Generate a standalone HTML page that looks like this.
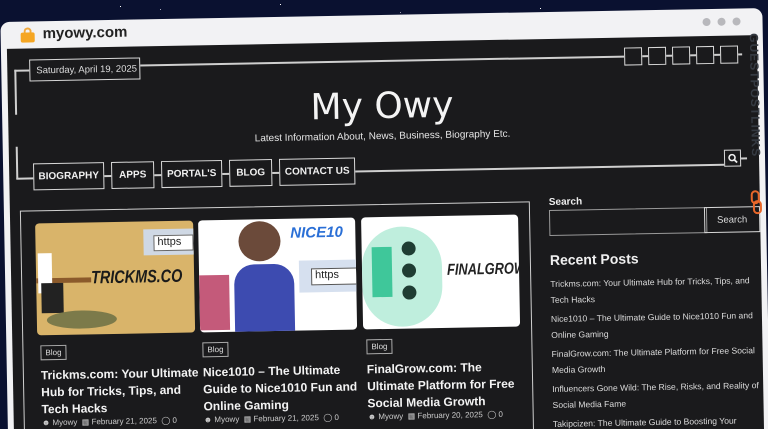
<!DOCTYPE html>
<html><head><meta charset="utf-8"><style>
*{margin:0;padding:0;box-sizing:border-box}
html,body{width:768px;height:429px;overflow:hidden;background:#0a1130;font-family:"Liberation Sans",sans-serif}
#clip{position:fixed;left:0;top:0;width:768px;height:429px;overflow:hidden;background:#0a1130}
#stage{position:absolute;left:0;top:0;width:768px;height:429px;transform:rotate(-1.05deg);transform-origin:384px 214px}
.win{position:absolute;left:4px;top:15px;width:762px;height:460px;background:#f2f2f4;border-radius:9px}
.bar{position:absolute;left:0;top:0;width:100%;height:27px}
.content{position:absolute;left:6px;top:27px;width:750px;height:440px;background:#1a1a1c}
.a{position:absolute}
.box{position:absolute;border:1.5px solid #d8d8d8;color:#eee}
.ln{position:absolute;background:#cfcfcf}
.nav{position:absolute;top:157px;height:27px;border:1.5px solid #d8d8d8;color:#f0f0f0;font-size:10px;font-weight:bold;display:flex;align-items:center;justify-content:center;white-space:nowrap}
.img{position:absolute;top:217px;height:112px;border-radius:4px;overflow:hidden}
.tag{position:absolute;top:339px;font-size:8px;color:#ddd;border:1px solid #aaa;padding:2px 4px}
.ct{position:absolute;top:361px;width:162px;font-weight:bold;font-size:12px;line-height:17px;color:#f3f3f3}
.meta{position:absolute;top:412px;font-size:8px;color:#ccc;white-space:nowrap}
.rp{position:absolute;left:549px;width:215px;font-size:8.6px;line-height:16px;color:#ddd}
</style></head><body>
<div id="clip">
<div style="position:absolute;left:120px;top:6px;width:1px;height:1px;background:#fff;box-shadow:40px 3px #aab,160px -2px #fff,280px 6px #99a,420px 2px #fff,520px 8px #ccd,-80px 30px #556,-100px 200px #445,660px -3px #bbc"></div>
<div id="stage">
<div class="win">
 <div class="bar">
  <div class="a" style="left:20px;top:6px;width:14px;height:13px">
   <div class="a" style="left:3px;top:0;width:8px;height:8px;border:2px solid #f2a93b;border-bottom:none;border-radius:4px 4px 0 0"></div>
   <div class="a" style="left:0;top:5px;width:14px;height:10px;background:#f5a623;border-radius:2px"></div>
  </div>
  <div class="a" style="left:42px;top:4px;font-size:15px;font-weight:bold;color:#222">myowy.com</div>
  <div class="a" style="left:702px;top:9px;width:8px;height:8px;border-radius:50%;background:#b8b8bc;box-shadow:15px 0 #b8b8bc,30px 0 #b8b8bc"></div>
 </div>
 <div class="content"></div>
</div>
<div class="ln" style="left:143px;top:60px;width:484px;height:1.5px"></div>
<div class="box" style="left:32px;top:53px;width:111px;height:22px;font-size:9.5px;padding:5px 0 0 6px;color:#ddd;white-space:nowrap">Saturday, April 19, 2025</div>
<div class="ln" style="left:17px;top:63px;width:15px;height:1.5px"></div>
<div class="ln" style="left:17px;top:63px;width:1.5px;height:45px"></div>
<div class="ln" style="left:17px;top:140px;width:1.5px;height:32px"></div>
<div class="ln" style="left:17px;top:171px;width:17px;height:1.5px"></div>
<div class="ln" style="left:645px;top:60px;width:100px;height:1.5px"></div>
<div class="box" style="left:627px;top:52px;width:18px;height:18px;background:#1a1a1c"></div>
<div class="box" style="left:651px;top:52px;width:18px;height:18px;background:#1a1a1c"></div>
<div class="box" style="left:675px;top:52px;width:18px;height:18px;background:#1a1a1c"></div>
<div class="box" style="left:699px;top:52px;width:18px;height:18px;background:#1a1a1c"></div>
<div class="box" style="left:723px;top:52px;width:18px;height:18px;background:#1a1a1c"></div>
<div class="a" style="left:0;top:86px;width:768px;text-align:center;font-family:'DejaVu Sans',sans-serif;font-size:36px;color:#f4f4f4">My Owy</div>
<div class="a" style="left:0;top:131px;width:768px;text-align:center;font-size:10px;color:#e4e4e4">Latest Information About, News, Business, Biography Etc.</div>
<div class="nav" style="left:34px;width:71px">BIOGRAPHY</div>
<div class="nav" style="left:112px;width:43px">APPS</div>
<div class="nav" style="left:162px;width:61px">PORTAL'S</div>
<div class="nav" style="left:230px;width:43px">BLOG</div>
<div class="nav" style="left:280px;width:76px">CONTACT US</div>
<div class="ln" style="left:105px;top:170px;width:7px;height:1.5px"></div>
<div class="ln" style="left:155px;top:170px;width:7px;height:1.5px"></div>
<div class="ln" style="left:223px;top:170px;width:7px;height:1.5px"></div>
<div class="ln" style="left:273px;top:170px;width:7px;height:1.5px"></div>
<div class="ln" style="left:356px;top:170px;width:369px;height:1.5px"></div>
<div class="box" style="left:725px;top:156px;width:17px;height:17px"><svg width="14" height="14" viewBox="0 0 14 14" style="position:absolute;left:1px;top:1px"><circle cx="6" cy="6" r="3" stroke="#eee" stroke-width="1.6" fill="none"/><path d="M8 8l3 3" stroke="#eee" stroke-width="1.8"/></svg></div>
<div class="ln" style="left:742px;top:164px;width:6px;height:1.5px"></div>
<div class="a" style="left:20px;top:204px;width:510px;height:300px;border:1.5px solid #cfcfcf"></div>
<div class="img" style="left:35px;width:158px;background:#d9b46a">
 <div class="a" style="left:108px;top:8px;width:60px;height:26px;background:#cfd8e4"></div>
 <div class="a" style="left:118px;top:14px;width:40px;height:16px;background:#fff;border:1px solid #666;font-size:11px;color:#222;padding-left:3px">https</div>
 <div class="a" style="left:55px;top:45px;font-weight:bold;font-style:italic;font-size:18px;color:#1a1a1a;transform:scaleX(.8);transform-origin:left">TRICKMS.CO</div>
 <div class="a" style="left:0;top:55px;width:55px;height:5px;background:#8b5a2b"></div>
 <div class="a" style="left:2px;top:30px;width:14px;height:40px;background:#fff"></div>
 <div class="a" style="left:5px;top:60px;width:22px;height:30px;background:#222"></div>
 <div class="a" style="left:10px;top:88px;width:70px;height:18px;border-radius:50%;background:#7c7a4a"></div>
</div>
<div class="img" style="left:198px;width:157px;background:#fff">
 <div class="a" style="left:92px;top:6px;font-weight:bold;font-style:italic;font-size:15px;color:#2a6fd6">NICE10</div>
 <div class="a" style="left:100px;top:42px;width:60px;height:32px;background:#d6e0ef"></div>
 <div class="a" style="left:112px;top:50px;width:46px;height:17px;background:#fff;border:1px solid #555;font-size:11px;color:#222;padding-left:3px">https</div>
 <div class="a" style="left:40px;top:2px;width:42px;height:40px;border-radius:50%;background:#6b4a3a"></div>
 <div class="a" style="left:35px;top:45px;width:60px;height:70px;border-radius:20px 20px 0 0;background:#3d4bb0"></div>
 <div class="a" style="left:0;top:55px;width:30px;height:55px;background:#c45a7a"></div>
</div>
<div class="img" style="left:361px;width:157px;background:#fff">
 <div class="a" style="left:0;top:10px;width:80px;height:100px;border-radius:40px;background:#bfeedd"></div>
 <div class="a" style="left:10px;top:30px;width:20px;height:50px;background:#3fc79a"></div>
 <div class="a" style="left:40px;top:25px;width:14px;height:14px;border-radius:50%;background:#1f3d33;box-shadow:0 22px #1f3d33,0 44px #1f3d33"></div>
 <div class="a" style="left:85px;top:46px;font-weight:bold;font-style:italic;font-size:16px;color:#222;transform:scaleX(.8);transform-origin:left">FINALGROW.C</div>
</div>
<div class="tag" style="left:38px">Blog</div>
<div class="tag" style="left:200px">Blog</div>
<div class="tag" style="left:364px">Blog</div>
<div class="ct" style="left:38px">Trickms.com: Your Ultimate Hub for Tricks, Tips, and Tech Hacks</div>
<div class="ct" style="left:200px">Nice1010 – The Ultimate Guide to Nice1010 Fun and Online Gaming</div>
<div class="ct" style="left:364px">FinalGrow.com: The Ultimate Platform for Free Social Media Growth</div>
<div class="meta" style="left:38px">&#9787; Myowy &nbsp;▦ February 21, 2025 &nbsp;◯ 0</div>
<div class="meta" style="left:200px">&#9787; Myowy &nbsp;▦ February 21, 2025 &nbsp;◯ 0</div>
<div class="meta" style="left:364px">&#9787; Myowy &nbsp;▦ February 20, 2025 &nbsp;◯ 0</div>
<div class="a" style="left:549px;top:200px;font-size:10px;font-weight:bold;color:#eee">Search</div>
<div class="a" style="left:549px;top:213px;width:158px;height:26px;border:1px solid #999"></div>
<div class="box" style="left:704px;top:213px;width:56px;height:26px;font-size:9.5px;text-align:center;padding-top:7px;color:#ddd">Search</div>
<div class="a" style="left:549px;top:255px;font-size:14px;font-weight:bold;color:#f0f0f0">Recent Posts</div>
<div class="rp" style="top:279px">Trickms.com: Your Ultimate Hub for Tricks, Tips, and Tech Hacks</div>
<div class="rp" style="top:314px">Nice1010 – The Ultimate Guide to Nice1010 Fun and Online Gaming</div>
<div class="rp" style="top:349px">FinalGrow.com: The Ultimate Platform for Free Social Media Growth</div>
<div class="rp" style="top:384px">Influencers Gone Wild: The Rise, Risks, and Reality of Social Media Fame</div>
<div class="rp" style="top:419px">Takipcizen: The Ultimate Guide to Boosting Your</div>
<div class="a" style="left:750px;top:40px;width:14px;height:150px;writing-mode:vertical-rl;font-size:12px;font-weight:bold;color:#353a42;letter-spacing:1px">GUESTPOSTLINKS</div>
<div class="a" style="left:751px;top:197px;width:9px;height:14px;border:2.5px solid #e8672a;border-radius:5px"></div>
<div class="a" style="left:753px;top:207px;width:9px;height:14px;border:2.5px solid #e8672a;border-radius:5px"></div>
</div>
</div>
</body></html>
